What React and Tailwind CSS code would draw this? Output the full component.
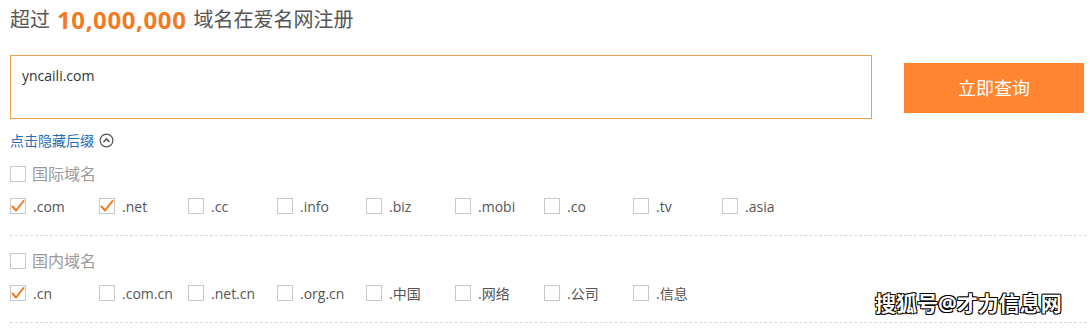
import React from "react";

const font = { fontFamily: '"Open Sans", "Noto Sans CJK SC", sans-serif' };

const intl = [
  [".com", true],
  [".net", true],
  [".cc", false],
  [".info", false],
  [".biz", false],
  [".mobi", false],
  [".co", false],
  [".tv", false],
  [".asia", false],
];

const cn = [
  [".cn", true],
  [".com.cn", false],
  [".net.cn", false],
  [".org.cn", false],
  [".中国", false],
  [".网络", false],
  [".公司", false],
  [".信息", false],
];

function Box({ checked }) {
  return (
    <span className="w-[16px] h-[16px] border border-[#c8c8c8] bg-white flex items-center justify-center shrink-0">
      {checked && (
        <svg width="14" height="14" viewBox="0 0 14 14">
          <path d="M1.5 7.5 L5 11.5 L12.5 2" fill="none" stroke="#f07a1e" strokeWidth="2" strokeLinecap="round" strokeLinejoin="round" />
        </svg>
      )}
    </span>
  );
}

function Section({ title, items }) {
  return (
    <div className="border-b border-dashed border-[#d8d8d8] pb-[21px]">
      <div className="flex items-center gap-[6px] h-[16px] text-[16px] text-[#9a9a9a]">
        <Box />
        <span>{title}</span>
      </div>
      <div className="flex mt-[16px] h-[16px]">
        {items.map(([name, on]) => (
          <div key={name} className="w-[89px] flex items-center gap-[7px] text-[14px] text-[#555]">
            <Box checked={on} />
            <span>{name}</span>
          </div>
        ))}
      </div>
    </div>
  );
}

export default function App() {
  return (
    <div style={font} className="relative w-[1091px] h-[330px] bg-white overflow-hidden pl-[10px] pr-[4px]">
      <div className="h-[40px] flex items-center gap-[7px] text-[20px] text-[#555]">
        <span>超过</span>
        <span className="text-[24px] font-bold text-[#f47a1f] tracking-[0.6px]">10,000,000</span>
        <span>域名在爱名网注册</span>
      </div>

      <div className="flex items-start mt-[15px]">
        <div className="w-[862px] h-[64px] border border-[#eea04c] px-[11px] pt-[9px] text-[14px] text-[#333]">
          yncaili.com
        </div>
        <button className="ml-[32px] mt-[8px] w-[180px] h-[50px] bg-[#ff8533] text-white text-[18px]">
          立即查询
        </button>
      </div>

      <div className="flex items-center gap-[5px] mt-[12px] h-[18px] text-[14px] text-[#2a6cb5]">
        <span>点击隐藏后缀</span>
        <svg width="15" height="15" viewBox="0 0 16 16">
          <circle cx="8" cy="8" r="6.8" fill="none" stroke="#555" strokeWidth="1.3" />
          <path d="M4.8 9.6 L8 6.3 L11.2 9.6" fill="none" stroke="#555" strokeWidth="1.6" />
        </svg>
      </div>

      <div className="mt-[17px] flex flex-col gap-[17px]">
        <Section title="国际域名" items={intl} />
        <Section title="国内域名" items={cn} />
      </div>

      <div className="absolute left-[875px] top-[288px] text-[21px] font-bold text-white [text-shadow:1px_1px_0_#000,-1px_-1px_0_#000,1px_-1px_0_#000,-1px_1px_0_#000]">
        搜狐号@才力信息网
      </div>
    </div>
  );
}
